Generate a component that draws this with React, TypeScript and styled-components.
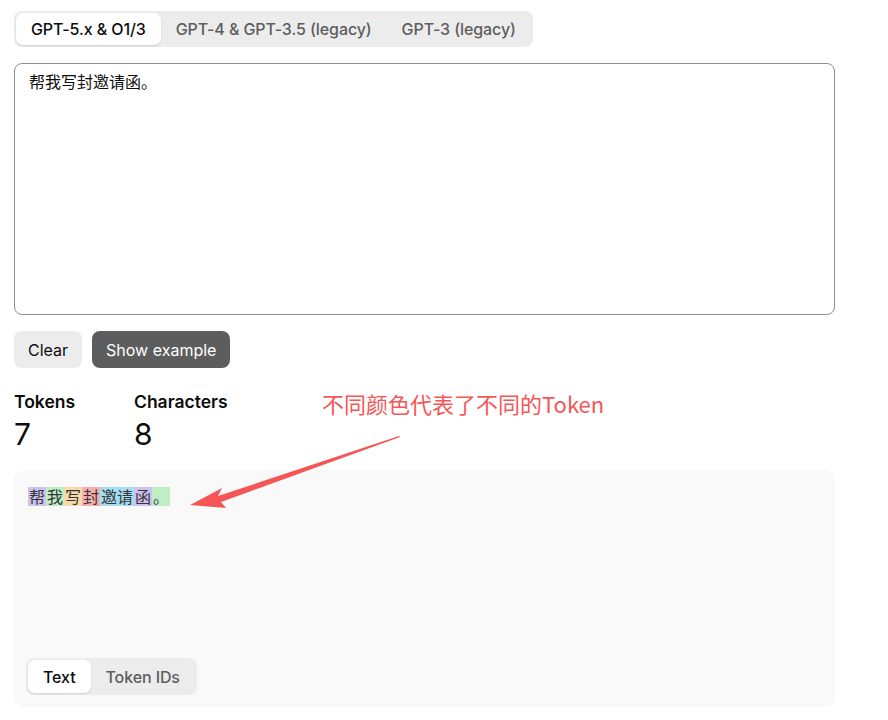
import React, { useState } from 'react';
import styled, { createGlobalStyle } from 'styled-components';

const GlobalStyle = createGlobalStyle`
  html, body {
    margin: 0;
    padding: 0;
    background: #fff;
  }
  body {
    font-family: Inter, "Noto Sans CJK SC", sans-serif;
    color: #0d0d0d;
  }
`;

const TOKEN_COLORS = [
  'rgba(107, 64, 216, 0.3)',
  'rgba(104, 222, 122, 0.4)',
  'rgba(244, 172, 54, 0.4)',
  'rgba(239, 65, 70, 0.4)',
  'rgba(39, 181, 234, 0.4)',
];

const tokens = ['帮', '我', '写', '封', '邀请', '函', '。'];

const App = () => {
  const [model, setModel] = useState(0);
  const [view, setView] = useState(0);
  const [text, setText] = useState('帮我写封邀请函。');

  const models = ['GPT-5.x & O1/3', 'GPT-4 & GPT-3.5 (legacy)', 'GPT-3 (legacy)'];

  return (
    <>
      <GlobalStyle />
      <Page>
        <Segmented>
          {models.map((m, i) => (
            <Segment key={m} active={i === model} onClick={() => setModel(i)}>
              {m}
            </Segment>
          ))}
        </Segmented>

        <TextArea value={text} onChange={(e) => setText(e.target.value)} />

        <ButtonRow>
          <Button onClick={() => setText('')}>Clear</Button>
          <Button dark>Show example</Button>
        </ButtonRow>

        <StatsRow>
          <Stat>
            <StatLabel>Tokens</StatLabel>
            <StatValue>7</StatValue>
          </Stat>
          <Stat>
            <StatLabel>Characters</StatLabel>
            <StatValue>8</StatValue>
          </Stat>
          <Annotation>不同颜色代表了不同的Token</Annotation>
          <Arrow width="230" height="90" viewBox="0 0 230 90">
            <path d="M219 10 L38 70 L42 62 L10 79 L46 82 L41 76 L220 11 Z" fill="#f55555" />
          </Arrow>
        </StatsRow>

        <Output>
          <TokenLine>
            {tokens.map((t, i) => (
              <Token key={i} color={TOKEN_COLORS[i % TOKEN_COLORS.length]}>
                {t}
              </Token>
            ))}
          </TokenLine>
          <Segmented small>
            {['Text', 'Token IDs'].map((v, i) => (
              <Segment key={v} active={i === view} onClick={() => setView(i)}>
                {v}
              </Segment>
            ))}
          </Segmented>
        </Output>
      </Page>
    </>
  );
};

export default App;

const Page = styled.div`
  width: 821px;
  padding: 11px 0 0 14px;
  display: flex;
  flex-direction: column;
`;

const Segmented = styled.div<{ small?: boolean }>`
  display: inline-flex;
  align-self: flex-start;
  background: #ececec;
  border-radius: 8px;
  padding: 2px;
  height: ${({ small }) => (small ? '37px' : '36px')};
  box-sizing: border-box;
`;

const Segment = styled.button<{ active: boolean }>`
  border: none;
  background: ${({ active }) => (active ? '#fff' : 'transparent')};
  box-shadow: ${({ active }) => (active ? '0 1px 2px rgba(0,0,0,0.12)' : 'none')};
  color: ${({ active }) => (active ? '#0d0d0d' : '#5d5d5d')};
  font-family: Inter, sans-serif;
  font-size: 16px;
  font-weight: 500;
  letter-spacing: -0.1px;
  padding: 0 15px;
  border-radius: 7px;
  cursor: pointer;
`;

const TextArea = styled.textarea`
  margin-top: 16px;
  width: 821px;
  height: 252px;
  box-sizing: border-box;
  border: 1px solid #8f8f8f;
  border-radius: 8px;
  padding: 5px 14px;
  font-family: "Noto Sans CJK SC", sans-serif;
  font-size: 16px;
  line-height: 24px;
  color: #0d0d0d;
  resize: none;
  outline: none;
`;

const ButtonRow = styled.div`
  display: flex;
  gap: 10px;
  margin-top: 16px;
`;

const Button = styled.button<{ dark?: boolean }>`
  height: 37px;
  border: none;
  border-radius: 8px;
  padding: 0 14px;
  background: ${({ dark }) => (dark ? '#5d5d5d' : '#ececec')};
  color: ${({ dark }) => (dark ? '#fff' : '#0d0d0d')};
  font-family: Inter, sans-serif;
  font-size: 16px;
  cursor: pointer;
`;

const StatsRow = styled.div`
  position: relative;
  display: flex;
  margin-top: 22px;
  height: 80px;
`;

const Stat = styled.div`
  width: 120px;
  display: flex;
  flex-direction: column;
`;

const StatLabel = styled.div`
  font-size: 17.5px;
  font-weight: 600;
  line-height: 24px;
`;

const StatValue = styled.div`
  font-size: 30px;
  line-height: 36px;
  margin-top: 2px;
`;

const Annotation = styled.div`
  position: absolute;
  left: 308px;
  top: 0;
  font-family: "Noto Sans CJK SC", sans-serif;
  font-size: 22px;
  line-height: 26px;
  color: #f55656;
`;

const Arrow = styled.svg`
  position: absolute;
  left: 166px;
  top: 36px;
  z-index: 2;
`;

const Output = styled.div`
  height: 237px;
  box-sizing: border-box;
  background: #f9f9f9;
  border-radius: 10px;
  padding: 17px 12px 12px 12px;
  display: flex;
  flex-direction: column;
  justify-content: space-between;
`;

const TokenLine = styled.div`
  display: flex;
  margin-left: 2px;
  font-family: "Noto Sans CJK SC", sans-serif;
  font-size: 16px;
  line-height: 19px;
  color: #353535;
`;

const Token = styled.span<{ color: string }>`
  background: ${({ color }) => color};
  padding: 0 1px;
`;
